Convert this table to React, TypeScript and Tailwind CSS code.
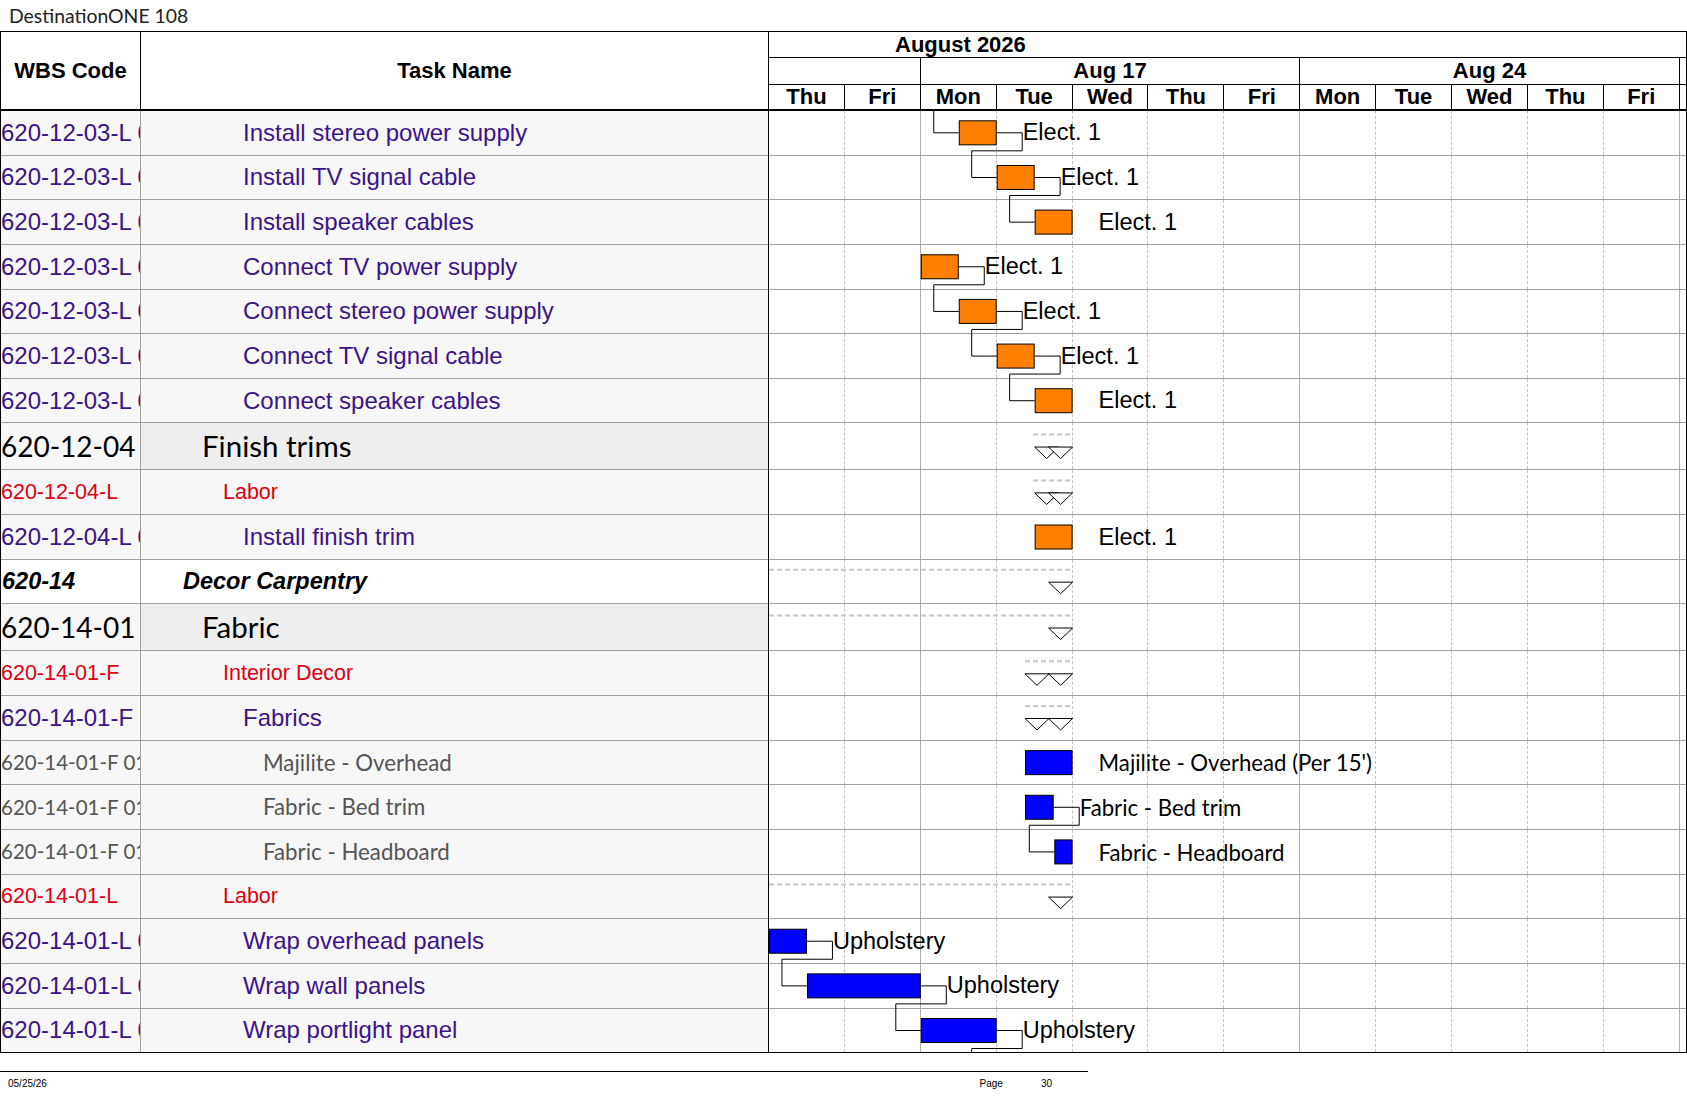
import React from 'react';

// timeline geometry (page px)
const DAY = 75.9;
const CHART_X = 769;
const day = (d: number) => CHART_X + d * DAY;
const HALF = DAY / 2;

type Kind = 'task' | 'red' | 'big' | 'italic' | 'gray';

interface Bar {
  x0: number;
  x1: number;
  color: string;
  label: string;
  lato?: boolean;
}

interface Summary {
  x0: number;
  x1: number;
  lineX0: number;
  startTri: boolean;
}

interface Row {
  wbs: string;
  name: string;
  kind: Kind;
  bar?: Bar;
  summary?: Summary;
  link?: boolean;
}

const ORANGE = '#ff8000';
const BLUE = '#0000ff';

const elect = (x0: number): Bar => ({ x0, x1: x0 + HALF, color: ORANGE, label: 'Elect. 1' });
const uph = (x0: number, x1: number): Bar => ({ x0, x1, color: BLUE, label: 'Upholstery' });

const MON1 = day(2);
const MON2 = day(2) + HALF;
const TUE1 = day(3);
const TUE2 = day(3) + HALF;
const END = day(4);

const rows: Row[] = [
  { wbs: '620-12-03-L 01', name: 'Install stereo power supply', kind: 'task', bar: elect(MON2), link: true },
  { wbs: '620-12-03-L 02', name: 'Install TV signal cable', kind: 'task', bar: elect(TUE1), link: true },
  { wbs: '620-12-03-L 03', name: 'Install speaker cables', kind: 'task', bar: elect(TUE2) },
  { wbs: '620-12-03-L 04', name: 'Connect TV power supply', kind: 'task', bar: elect(MON1), link: true },
  { wbs: '620-12-03-L 05', name: 'Connect stereo power supply', kind: 'task', bar: elect(MON2), link: true },
  { wbs: '620-12-03-L 06', name: 'Connect TV signal cable', kind: 'task', bar: elect(TUE1), link: true },
  { wbs: '620-12-03-L 07', name: 'Connect speaker cables', kind: 'task', bar: elect(TUE2) },
  { wbs: '620-12-04', name: 'Finish trims', kind: 'big', summary: { x0: TUE2, x1: END, lineX0: 1033, startTri: true } },
  { wbs: '620-12-04-L', name: 'Labor', kind: 'red', summary: { x0: TUE2, x1: END, lineX0: 1033, startTri: true } },
  { wbs: '620-12-04-L 01', name: 'Install finish trim', kind: 'task', bar: elect(TUE2) },
  { wbs: '620-14', name: 'Decor Carpentry', kind: 'italic', summary: { x0: CHART_X, x1: END, lineX0: CHART_X, startTri: false } },
  { wbs: '620-14-01', name: 'Fabric', kind: 'big', summary: { x0: CHART_X, x1: END, lineX0: CHART_X, startTri: false } },
  { wbs: '620-14-01-F', name: 'Interior Decor', kind: 'red', summary: { x0: 1025, x1: END, lineX0: 1025, startTri: true } },
  { wbs: '620-14-01-F 01', name: 'Fabrics', kind: 'task', summary: { x0: 1025, x1: END, lineX0: 1025, startTri: true } },
  {
    wbs: '620-14-01-F 01.01',
    name: 'Majilite - Overhead',
    kind: 'gray',
    bar: { x0: 1025, x1: END, color: BLUE, label: "Majilite - Overhead (Per 15')", lato: true },
  },
  {
    wbs: '620-14-01-F 01.02',
    name: 'Fabric - Bed trim',
    kind: 'gray',
    bar: { x0: 1025, x1: 1053.7, color: BLUE, label: 'Fabric - Bed trim', lato: true },
    link: true,
  },
  {
    wbs: '620-14-01-F 01.03',
    name: 'Fabric - Headboard',
    kind: 'gray',
    bar: { x0: 1054.3, x1: END, color: BLUE, label: 'Fabric - Headboard', lato: true },
  },
  { wbs: '620-14-01-L', name: 'Labor', kind: 'red', summary: { x0: CHART_X, x1: END, lineX0: CHART_X, startTri: false } },
  { wbs: '620-14-01-L 01', name: 'Wrap overhead panels', kind: 'task', bar: uph(day(0), day(0) + HALF), link: true },
  { wbs: '620-14-01-L 02', name: 'Wrap wall panels', kind: 'task', bar: uph(day(0) + HALF, day(2)), link: true },
  { wbs: '620-14-01-L 03', name: 'Wrap portlight panel', kind: 'task', bar: uph(day(2), day(3)), link: true },
];

const days = ['Thu', 'Fri', 'Mon', 'Tue', 'Wed', 'Thu', 'Fri', 'Mon', 'Tue', 'Wed', 'Thu', 'Fri'];
const weekEnds = [1, 6, 11];

const wbsText: Record<Kind, string> = {
  task: 'text-[24px] text-[#3c1389]',
  red: 'text-[21.5px] text-[#e0000f]',
  big: "text-[28px] text-black font-['Lato',sans-serif]",
  italic: 'text-[23.5px] font-bold italic text-black pl-[1px]',
  gray: "text-[20.5px] text-[#555555] font-['Lato',sans-serif]",
};

const nameText: Record<Kind, string> = {
  task: 'text-[24px] text-[#3c1389] pl-[102px] bg-[#f7f7f7]',
  red: 'text-[21.5px] text-[#e0000f] pl-[82px] bg-[#f7f7f7]',
  big: "text-[29.5px] text-black font-['Lato',sans-serif] pl-[61px] bg-[#eeeeee]",
  italic: 'text-[23.5px] font-bold italic text-black pl-[42px] bg-white',
  gray: "text-[22.3px] text-[#555555] font-['Lato',sans-serif] pl-[122px] bg-[#f7f7f7]",
};

const heightOf = (r: Row) => (r.kind === 'big' ? 47 : 44.65);
const heights = rows.map(heightOf);
const tops = heights.map((_, i) => heights.slice(0, i).reduce((a, b) => a + b, 0));
const bodyH = heights.reduce((a, b) => a + b, 0);
const mid = (i: number) => tops[i] + (heights[i] - 1) / 2;
const sx = (x: number) => x - CHART_X;

const ARIAL = "'Liberation Sans', Arial, sans-serif";
const LATO = "Lato, 'Liberation Sans', sans-serif";

const Triangle: React.FC<{ x: number; y: number }> = ({ x, y }) => (
  <path d={`M${x} ${y} L${x + 24} ${y} L${x + 12} ${y + 11.5} Z`} fill="#fff" stroke="#000" strokeWidth={1} />
);

const GanttOverlay: React.FC = () => {
  const links: string[] = [];
  // link coming from a task above the visible page
  links.push(`M${sx(MON2 - 25)} 0 V${mid(0)} H${sx(MON2)}`);
  rows.forEach((r, i) => {
    if (!r.link || !r.bar) return;
    const next = rows[i + 1]?.bar;
    const nx0 = next ? next.x0 : TUE1;
    const ny = next ? mid(i + 1) : bodyH + 10;
    const m = mid(i);
    links.push(
      `M${sx(r.bar.x1)} ${m} H${sx(r.bar.x1 + 25.5)} V${m + 18} H${sx(nx0 - 25)} V${ny} H${sx(nx0)}`
    );
  });

  return (
    <svg className="absolute left-0 top-0 pointer-events-none" width={917} height={bodyH}>
      {rows.map((r, i) => {
        if (!r.summary) return null;
        const s = r.summary;
        const m = mid(i);
        return (
          <g key={`s${i}`}>
            <line
              x1={sx(s.lineX0)}
              x2={sx(s.x1)}
              y1={m - 12}
              y2={m - 12}
              stroke="#c8c8c8"
              strokeWidth={2}
              strokeDasharray="5 3"
            />
            {s.startTri && <Triangle x={sx(s.x0)} y={m + 0.5} />}
            <Triangle x={sx(s.x1) - 24} y={m + 0.5} />
          </g>
        );
      })}
      {links.map((d, i) => (
        <path key={`l${i}`} d={d} fill="none" stroke="#000" strokeWidth={1} />
      ))}
      {rows.map((r, i) => {
        if (!r.bar) return null;
        const b = r.bar;
        const m = mid(i);
        return (
          <g key={`b${i}`}>
            <rect
              x={sx(b.x0) + 0.5}
              y={m - 12}
              width={b.x1 - b.x0 - 1}
              height={24}
              fill={b.color}
              stroke="#000"
              strokeWidth={1}
            />
            <text
              x={sx(b.x1) + 26}
              y={b.lato ? m + 8.6 : m + 7.6}
              fontFamily={b.lato ? LATO : ARIAL}
              fontSize={b.lato ? 22.2 : 23.5}
              fill="#000"
            >
              {b.label}
            </text>
          </g>
        );
      })}
    </svg>
  );
};

const ChartRowGrid: React.FC = () => (
  <div className="flex h-full">
    {days.map((d, i) =>
      weekEnds.includes(i) ? (
        <div key={i} className="h-full w-[75.9px] shrink-0 border-r border-[#b0b0b0]" />
      ) : (
        <div key={i} className="h-full w-[75.9px] shrink-0 border-r border-dashed border-[#c4c4c4]" />
      )
    )}
    <div className="flex-1" />
  </div>
);

export default function App() {
  return (
    <div className="w-[1687px] h-[1097px] bg-white overflow-hidden font-['Liberation_Sans',Arial,sans-serif] text-black">
      <div className="h-[31px] pl-[9px] flex items-center font-['Lato',sans-serif] text-[19.4px] text-[#222222]">
        DestinationONE 108
      </div>

      <div className="border-l border-r border-t border-black">
        {/* header */}
        <div className="flex h-[79px] border-b-2 border-black leading-none">
          <div className="w-[140px] shrink-0 border-r border-black flex items-center justify-center font-bold text-[22px]">
            WBS Code
          </div>
          <div className="w-[628px] shrink-0 border-r border-black flex items-center justify-center font-bold text-[22px]">
            Task Name
          </div>
          <div className="flex-1 flex flex-col font-bold text-[22px]">
            <div className="h-[26px] shrink-0 border-b border-black flex items-center pl-[126px]">August 2026</div>
            <div className="h-[27px] shrink-0 border-b border-black flex">
              <div className="w-[151.8px] shrink-0 border-r border-black" />
              <div className="w-[379.5px] shrink-0 border-r border-black flex items-center justify-center">Aug 17</div>
              <div className="w-[379.5px] shrink-0 border-r border-black flex items-center justify-center">Aug 24</div>
              <div className="flex-1" />
            </div>
            <div className="h-[24px] shrink-0 flex">
              {days.map((d, i) => (
                <div
                  key={i}
                  className="w-[75.9px] shrink-0 border-r border-black flex items-center justify-center"
                >
                  {d}
                </div>
              ))}
              <div className="flex-1" />
            </div>
          </div>
        </div>

        {/* body */}
        <div className="flex">
          <div className="w-[768px] shrink-0 border-r border-black">
            {rows.map((r, i) => {
              const last = i === rows.length - 1;
              return (
                <div
                  key={i}
                  className={`flex ${r.kind === 'big' ? 'h-[47px]' : 'h-[44.65px]'} border-b ${
                    last ? 'border-black' : 'border-[#a0a0a0]'
                  }`}
                >
                  <div
                    className={`w-[140px] shrink-0 border-r border-[#a0a0a0] overflow-hidden whitespace-nowrap flex items-center ${
                      r.kind === 'italic' ? 'bg-white' : 'bg-[#f7f7f7]'
                    } ${wbsText[r.kind]}`}
                  >
                    {r.wbs}
                  </div>
                  <div className={`flex-1 flex items-center whitespace-nowrap ${nameText[r.kind]}`}>{r.name}</div>
                </div>
              );
            })}
          </div>

          <div className="flex-1 relative">
            {rows.map((r, i) => {
              const last = i === rows.length - 1;
              return (
                <div
                  key={i}
                  className={`${r.kind === 'big' ? 'h-[47px]' : 'h-[44.65px]'} border-b ${
                    last ? 'border-black' : 'border-[#a0a0a0]'
                  }`}
                >
                  <ChartRowGrid />
                </div>
              );
            })}
            <GanttOverlay />
          </div>
        </div>
      </div>

      {/* page footer */}
      <div className="mt-[18px] w-[1088px] border-t border-black" />
      <div className="w-[1088px] flex items-center pt-[6px] text-[10px] leading-[12px] text-black">
        <span className="pl-[8px]">05/25/26</span>
        <span className="ml-auto">Page</span>
        <span className="ml-[38px]">30</span>
        <span className="w-[36px]" />
      </div>
    </div>
  );
}
